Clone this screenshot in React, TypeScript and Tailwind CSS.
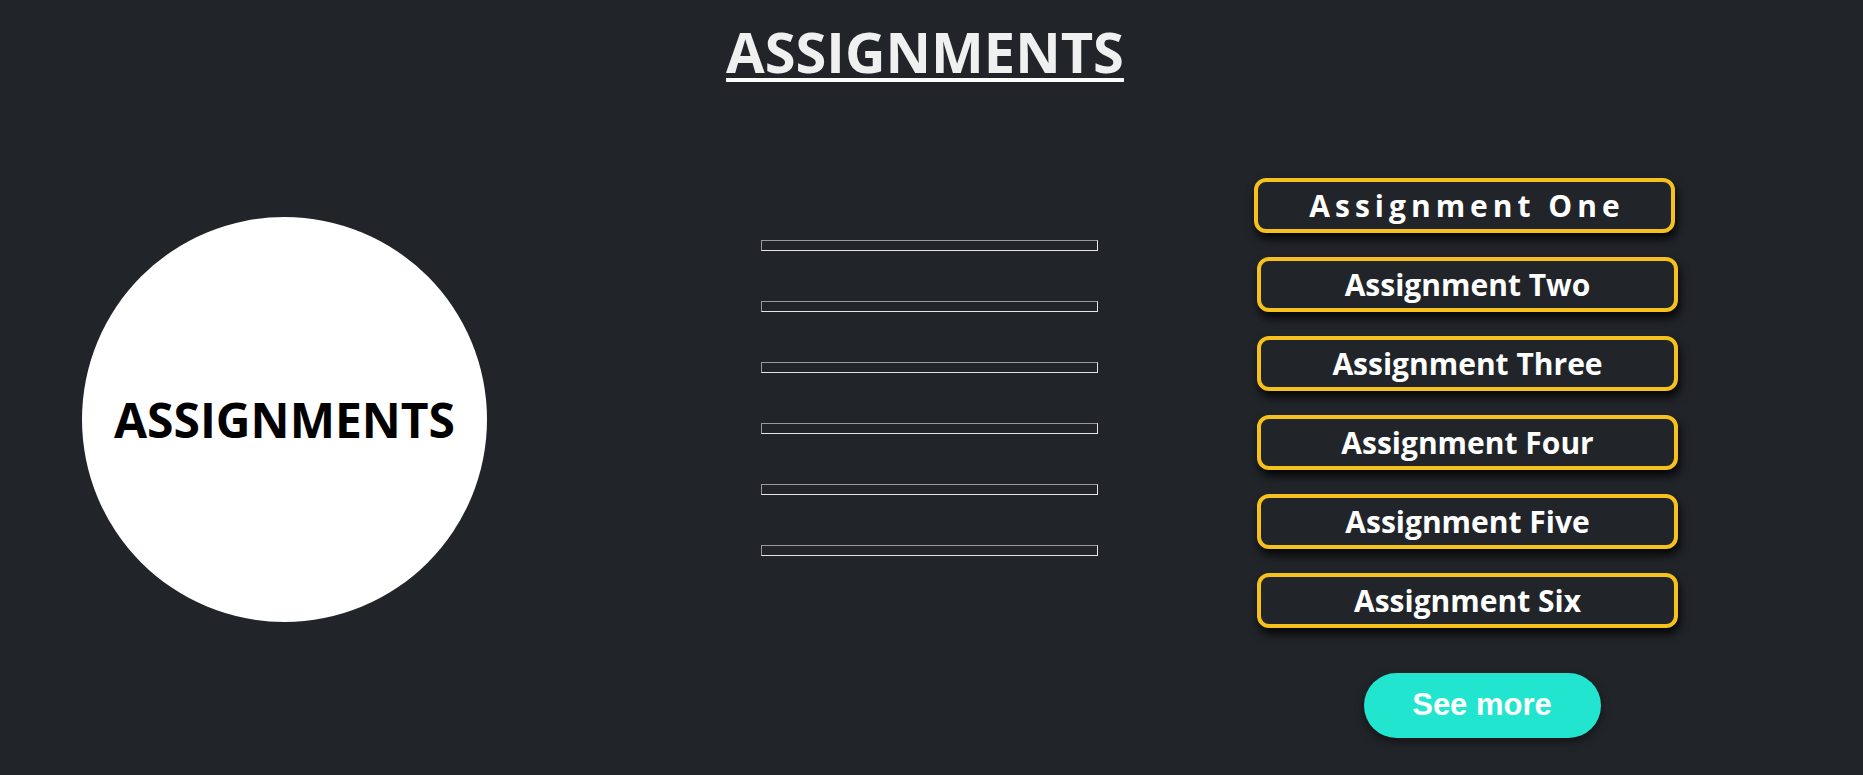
const assignments = [
  "Assignment Two",
  "Assignment Three",
  "Assignment Four",
  "Assignment Five",
  "Assignment Six",
];

export default function App() {
  return (
    <div className="min-h-screen bg-[#212429] font-['Open_Sans',sans-serif]">
      <div className="flex justify-center pt-[23px] pr-[13px]">
        <h1 className="text-[56px] font-bold leading-none text-[#eff0f0] underline decoration-white decoration-[4px] underline-offset-[5px]">
          ASSIGNMENTS
        </h1>
      </div>

      <div className="mt-[99px] flex items-start pl-[82px]">
        {/* big circle */}
        <div className="mt-[39px] flex h-[405px] w-[405px] shrink-0 items-center justify-center rounded-full bg-white">
          <span className="text-[48px] font-bold leading-none text-black">ASSIGNMENTS</span>
        </div>

        {/* empty bars */}
        <div className="ml-[274px] mt-[62px] flex w-[337px] shrink-0 flex-col gap-[50px]">
          {[0, 1, 2, 3, 4, 5].map((i) => (
            <div
              key={i}
              className="h-[11px] border border-t-[#9a9a9a] border-l-[#9a9a9a] border-b-[#e6e6e6] border-r-[#e6e6e6]"
            />
          ))}
        </div>

        {/* buttons */}
        <div className="ml-[159px] flex w-[421px] shrink-0 flex-col items-center">
          <div className="flex w-full flex-col gap-[24px]">
            <button className="-translate-x-[3px] h-[55px] w-full rounded-[12px] border-4 border-[#f6c11c] bg-[#212429] pl-[5px] text-[30px] font-bold leading-none tracking-[5px] text-white shadow-[2px_6px_10px_rgba(0,0,0,0.85)]">
              Assignment One
            </button>
            {assignments.map((a) => (
              <button
                key={a}
                className="h-[55px] w-full rounded-[12px] border-4 border-[#f6c11c] bg-[#212429] text-[30px] font-bold leading-none text-white shadow-[2px_6px_10px_rgba(0,0,0,0.85)]"
              >
                {a}
              </button>
            ))}
          </div>
          <button className="ml-[29px] mt-[45px] h-[65px] w-[237px] rounded-full bg-[#22e5cf] font-['Liberation_Sans',Arial,sans-serif] text-[31px] font-bold text-white shadow-[0_4px_10px_rgba(0,0,0,0.45)]">
            See more
          </button>
        </div>
      </div>
    </div>
  );
}
